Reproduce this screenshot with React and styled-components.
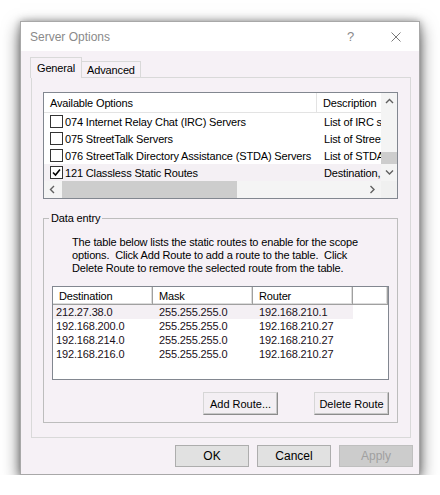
import React from 'react';
import styled, { createGlobalStyle } from 'styled-components';

const GlobalStyle = createGlobalStyle`
  * { box-sizing: border-box; }
  body {
    margin: 0;
    background: #fff;
    font-family: "Liberation Sans", Arial, sans-serif;
    font-size: 11px;
    letter-spacing: -0.15px;
    color: #000;
  }
`

const Window = styled.div`
  margin: 21px 0 0 20px;
  width: 400px;
  height: 454px;
  border: 1px solid #a8a8a8;
  box-shadow: 0 6px 16px rgba(0, 0, 0, 0.6), 0 0 7px rgba(0, 0, 0, 0.3);
  background: #f6f1f6;
  display: flex;
  flex-direction: column;
`

const TitleBar = styled.div`
  flex: none;
  height: 29px;
  background: #fff;
  display: flex;
  align-items: center;
  padding-left: 9px;
`

const Title = styled.div`
  flex: 1;
  font-size: 12px;
  letter-spacing: 0;
  color: #8a8a8a;
`

const TitleButton = styled.div`
  width: ${p => p.$w}px;
  height: 29px;
  display: flex;
  align-items: center;
  justify-content: center;
  color: #8a8a8a;
  font-size: 13px;
`

const Body = styled.div`
  flex: 1;
  padding: 6px 8px 0 10px;
`

const TabStrip = styled.div`
  position: relative;
  z-index: 1;
  display: flex;
  align-items: flex-end;
  height: 20px;
  margin-left: -1px;
`

const Tab = styled.div`
  height: ${p => (p.$active ? 21 : 16)}px;
  margin-bottom: ${p => (p.$active ? -1 : 0)}px;
  margin-left: ${p => (p.$active ? 0 : -1)}px;
  padding: ${p => (p.$active ? '0 6px' : '1px 5px 0')};
  border: 1px solid #d9d9d9;
  border-bottom: none;
  background: #f6f1f6;
  display: flex;
  align-items: center;
`

const Panel = styled.div`
  height: 361px;
  border: 1px solid #d9d9d9;
  padding: 14px 12px 0 11px;
`

const ListBox = styled.div`
  height: 107px;
  border: 1px solid #828790;
  background: #fff;
  display: grid;
  grid-template-columns: 1fr 16px;
  grid-template-rows: 1fr 17px;
`

const ListContent = styled.div`
  overflow: hidden;
`

const OptionsHeader = styled.div`
  display: grid;
  grid-template-columns: 273px 1fr;
  height: 20px;
  border-bottom: 1px solid #e3e3e3;
`

const OptionsHeadCell = styled.div`
  display: flex;
  align-items: center;
  padding-left: ${p => p.$pad}px;
  white-space: nowrap;
  overflow: hidden;
  border-right: ${p => (p.$divider ? '1px solid #e3e3e3' : 'none')};
`

const OptionRow = styled.div`
  display: grid;
  grid-template-columns: 273px 1fr;
  height: 17px;
  align-items: center;
  background: ${p => (p.$shaded ? '#f4f0f4' : '#fff')};
`

const OptionName = styled.div`
  display: flex;
  align-items: center;
  gap: 2px;
  padding-left: 6px;
  white-space: nowrap;
`

const OptionDesc = styled.div`
  padding-left: 7px;
  white-space: nowrap;
  overflow: hidden;
`

const CheckBox = styled.span`
  width: 13px;
  height: 13px;
  border: 1px solid #333;
  background: #fff;
  display: inline-flex;
  align-items: center;
  justify-content: center;
`

const VScroll = styled.div`
  display: flex;
  flex-direction: column;
  background: #f4f4f4;
`

const HScroll = styled.div`
  display: flex;
  background: #f4f4f4;
`

const ScrollArrow = styled.div`
  flex: none;
  width: ${p => (p.$vertical ? 16 : 17)}px;
  height: 17px;
  display: flex;
  align-items: center;
  justify-content: center;
`

const Track = styled.div`
  flex: 1;
  display: flex;
  flex-direction: ${p => (p.$vertical ? 'column' : 'row')};
  justify-content: ${p => (p.$vertical ? 'flex-end' : 'flex-start')};
`

const Thumb = styled.div`
  background: #cdcdcd;
  ${p => (p.$vertical ? 'height: 12px;' : 'width: 175px; margin: 0 0 0 1px;')}
`

const Corner = styled.div`
  background: #f0f0f0;
`

const GroupBox = styled.fieldset`
  margin: 13px 0 0 0;
  padding: 0;
  min-width: 0;
  border: 1px solid #bdbdbd;
`

const Legend = styled.legend`
  margin-left: 5px;
  padding: 0 2px;
  line-height: 13px;
`

const GroupBody = styled.div`
  padding: 0 8px 7px 8px;
`

const Description = styled.div`
  margin: 11px 0 0 20px;
  line-height: 13px;
  white-space: pre;
`

const RouteTable = styled.div`
  margin-top: 11px;
  height: 94px;
  border: 1px solid #828790;
  background: #fff;
`

const RouteHeader = styled.div`
  display: grid;
  grid-template-columns: 100px 100px 100px 1fr;
  height: 18px;
`

const RouteHeadCell = styled.div`
  display: flex;
  align-items: center;
  padding-left: 6px;
  background: #fff;
  border-right: 1px solid #a0a0a0;
  border-bottom: 1px solid #a0a0a0;
  box-shadow: inset -1px -1px 0 #dcdcdc;
`

const RouteRow = styled.div`
  display: grid;
  grid-template-columns: 100px 100px 100px;
  width: 300px;
  height: 14px;
  align-items: center;
  background: ${p => (p.$selected ? '#f4f0f4' : 'transparent')};
  color: #1a1020;
`

const RouteCell = styled.div`
  padding-left: 6px;
  &:first-child { padding-left: 3px; }
`

const ActionRow = styled.div`
  display: flex;
  justify-content: flex-end;
  gap: 36px;
  margin-top: 12px;
`

const ActionButton = styled.button`
  width: 75px;
  height: 23px;
  padding: 0;
  font: inherit;
  color: #000;
  background: #f3eff3;
  border: 1px solid #d6d6d6;
  border-right-color: #8c8c8c;
  border-bottom-color: #8c8c8c;
  box-shadow: inset -1px -1px 0 #c8c8c8;
`

const Footer = styled.div`
  display: flex;
  justify-content: flex-end;
  gap: 8px;
  margin: 7px -2px 0 0;
`

const DialogButton = styled.button`
  width: 74px;
  height: 22px;
  padding: 0;
  font: inherit;
  font-size: 12px;
  letter-spacing: 0;
  color: ${p => (p.disabled ? '#a0a0a0' : '#000')};
  background: ${p => (p.disabled ? '#cccccc' : '#e1e1e1')};
  border: 1px solid ${p => (p.disabled ? '#bfbfbf' : '#adadad')};
`

const Chevron = ({ dir }) => {
  const pts = {
    up: '1,5 4.5,1.5 8,5',
    down: '1,1.5 4.5,5 8,1.5',
    left: '5,1 1.5,4.5 5,8',
    right: '1.5,1 5,4.5 1.5,8',
  }[dir]
  const vertical = dir === 'up' || dir === 'down'
  return (
    <svg width={vertical ? 9 : 7} height={vertical ? 7 : 9} viewBox={vertical ? '0 0 9 7' : '0 0 7 9'}>
      <polyline points={pts} fill="none" stroke="#606060" strokeWidth="1.4" />
    </svg>
  )
}

const CheckMark = () => (
  <svg width="11" height="11" viewBox="0 0 11 11">
    <polyline points="2,5.5 4.5,8 9,2.5" fill="none" stroke="#000" strokeWidth="1.6" />
  </svg>
)

const options = [
  { name: '074 Internet Relay Chat (IRC) Servers', desc: 'List of IRC servers available' },
  { name: '075 StreetTalk Servers', desc: 'List of StreetTalk servers' },
  { name: '076 StreetTalk Directory Assistance (STDA) Servers', desc: 'List of STDA servers' },
  { name: '121 Classless Static Routes', desc: 'Destination, mask and router', checked: true },
]

const routes = [
  ['212.27.38.0', '255.255.255.0', '192.168.210.1'],
  ['192.168.200.0', '255.255.255.0', '192.168.210.27'],
  ['192.168.214.0', '255.255.255.0', '192.168.210.27'],
  ['192.168.216.0', '255.255.255.0', '192.168.210.27'],
]

const App = () => {
  return (
    <>
      <GlobalStyle />
      <Window>
        <TitleBar>
          <Title>Server Options</Title>
          <TitleButton $w={45}>?</TitleButton>
          <TitleButton $w={46}>
            <svg width="10" height="10" viewBox="0 0 10 10">
              <path d="M0.5 0.5 L9.5 9.5 M9.5 0.5 L0.5 9.5" stroke="#7a7a7a" strokeWidth="1" />
            </svg>
          </TitleButton>
        </TitleBar>
        <Body>
          <TabStrip>
            <Tab $active>General</Tab>
            <Tab>Advanced</Tab>
          </TabStrip>
          <Panel>
            <ListBox>
              <ListContent>
                <OptionsHeader>
                  <OptionsHeadCell $pad={6} $divider>Available Options</OptionsHeadCell>
                  <OptionsHeadCell $pad={6}>Description</OptionsHeadCell>
                </OptionsHeader>
                {options.map(o => (
                  <OptionRow key={o.name} $shaded={o.checked}>
                    <OptionName>
                      <CheckBox>{o.checked && <CheckMark />}</CheckBox>
                      {o.name}
                    </OptionName>
                    <OptionDesc>{o.desc}</OptionDesc>
                  </OptionRow>
                ))}
              </ListContent>
              <VScroll>
                <ScrollArrow $vertical><Chevron dir="up" /></ScrollArrow>
                <Track $vertical><Thumb $vertical /></Track>
                <ScrollArrow $vertical><Chevron dir="down" /></ScrollArrow>
              </VScroll>
              <HScroll>
                <ScrollArrow><Chevron dir="left" /></ScrollArrow>
                <Track><Thumb /></Track>
                <ScrollArrow><Chevron dir="right" /></ScrollArrow>
              </HScroll>
              <Corner />
            </ListBox>

            <GroupBox>
              <Legend>Data entry</Legend>
              <GroupBody>
                <Description>
                  {'The table below lists the static routes to enable for the scope\noptions.  Click Add Route to add a route to the table.  Click\nDelete Route to remove the selected route from the table.'}
                </Description>
                <RouteTable>
                  <RouteHeader>
                    <RouteHeadCell>Destination</RouteHeadCell>
                    <RouteHeadCell>Mask</RouteHeadCell>
                    <RouteHeadCell>Router</RouteHeadCell>
                    <RouteHeadCell />
                  </RouteHeader>
                  {routes.map((r, i) => (
                    <RouteRow key={r[0]} $selected={i === 0}>
                      {r.map(c => <RouteCell key={c}>{c}</RouteCell>)}
                    </RouteRow>
                  ))}
                </RouteTable>
                <ActionRow>
                  <ActionButton>Add Route...</ActionButton>
                  <ActionButton>Delete Route</ActionButton>
                </ActionRow>
              </GroupBody>
            </GroupBox>
          </Panel>
          <Footer>
            <DialogButton>OK</DialogButton>
            <DialogButton>Cancel</DialogButton>
            <DialogButton disabled>Apply</DialogButton>
          </Footer>
        </Body>
      </Window>
    </>
  )
}

export default App
